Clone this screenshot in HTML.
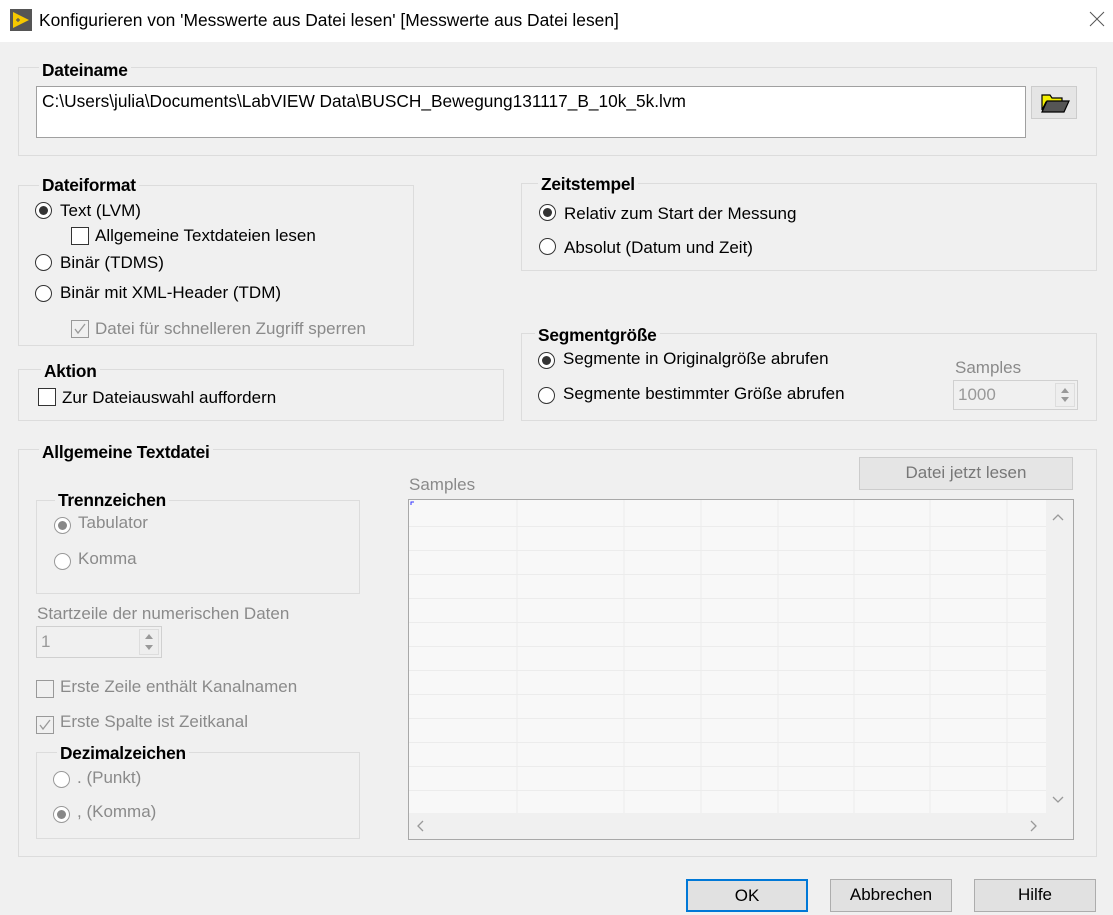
<!DOCTYPE html>
<html><head><meta charset="utf-8"><style>
*{box-sizing:border-box;margin:0;padding:0}
body{width:1113px;height:915px;background:#f0f0f0;font-family:"Liberation Sans",sans-serif;font-size:17px;color:#000;position:relative;overflow:hidden}
.a{position:absolute;white-space:nowrap}
.box{position:absolute;border:1px solid #dcdcdc}
.lb{position:absolute;font-weight:bold;font-size:17.3px;background:#f0f0f0;padding:0 3px;white-space:nowrap;line-height:20px;letter-spacing:-0.2px}
.g{color:#8a8a8a}
.r{position:absolute;width:17px;height:17px;border:1px solid #333;border-radius:50%;background:#fff}
.r.on::after{content:"";position:absolute;left:3px;top:3px;width:9px;height:9px;border-radius:50%;background:#333}
.r.d{border-color:#999}
.r.d.on::after{background:#888}
.c{position:absolute;width:18px;height:18px;border:1px solid #333;background:#fff}
.c.d{border-color:#999;background:#f0f0f0}
.btn{position:absolute;border:1px solid #adadad;background:#e1e1e1;text-align:center;line-height:30px}
.num{position:absolute;border:1px solid #d0d0d0;background:#f0f0f0;color:#999;padding-left:4px}
.sp{position:absolute;top:2px;bottom:2px;right:2px;width:20px;border:1px solid #ddd;background:#eee}
.sp::before{content:"";position:absolute;left:5px;top:4px;border:4px solid transparent;border-bottom:5px solid #999;border-top:0}
.sp::after{content:"";position:absolute;left:5px;bottom:4px;border:4px solid transparent;border-top:5px solid #999;border-bottom:0}
</style></head><body>
<div class="a" style="left:0;top:0;width:1113px;height:42px;background:#fff"></div>
<svg class="a" style="left:10px;top:9px" width="22" height="22"><rect width="22" height="22" fill="#555"/><path d="M3 3 L19 11 L3 19Z" fill="#f5c800"/><path d="M6 11h4M8 9v4" stroke="#555" stroke-width="1.2"/></svg>
<div class="a" style="left:39px;top:10px;font-size:17.4px">Konfigurieren von 'Messwerte aus Datei lesen' [Messwerte aus Datei lesen]</div>
<svg class="a" style="left:1089px;top:11px" width="16" height="16"><path d="M1 1L15 15M15 1L1 15" stroke="#555" stroke-width="1"/></svg>

<div class="box" style="left:18px;top:67px;width:1079px;height:89px"></div>
<div class="lb" style="left:39px;top:60px">Dateiname</div>
<div class="a" style="left:36px;top:86px;width:990px;height:52px;background:#fff;border:1px solid #a0a0a0"></div>
<div class="a" style="left:42px;top:91px;font-size:17.3px">C:\Users\julia\Documents\LabVIEW Data\BUSCH_Bewegung131117_B_10k_5k.lvm</div>
<div class="btn" style="left:1031px;top:86px;width:46px;height:33px;border-color:#ccc;background:#e5e5e5"></div>
<svg class="a" style="left:1040px;top:92px" width="30" height="22"><path d="M2 3h8l2 3h10v4H6L2 18Z" fill="#f4f000" stroke="#000" stroke-width="1.2"/><path d="M2 20L7 9h22l-5 11Z" fill="#555" stroke="#000" stroke-width="1.2"/></svg>

<div class="box" style="left:18px;top:185px;width:396px;height:161px"></div>
<div class="lb" style="left:39px;top:175px">Dateiformat</div>
<div class="r on" style="left:35px;top:202px"></div><div class="a" style="left:60px;top:201px">Text (LVM)</div>
<div class="c" style="left:71px;top:227px"></div><div class="a" style="left:95px;top:226px">Allgemeine Textdateien lesen</div>
<div class="r" style="left:35px;top:254px"></div><div class="a" style="left:60px;top:253px">Binär (TDMS)</div>
<div class="r" style="left:35px;top:285px"></div><div class="a" style="left:60px;top:283px">Binär mit XML-Header (TDM)</div>
<div class="c d" style="left:71px;top:320px"></div><svg class="a" style="left:73px;top:322px" width="14" height="14"><path d="M2 7l3 4 7-9" stroke="#999" fill="none" stroke-width="1.3"/></svg>
<div class="a g" style="left:95px;top:319px">Datei für schnelleren Zugriff sperren</div>

<div class="box" style="left:18px;top:369px;width:486px;height:52px"></div>
<div class="lb" style="left:41px;top:361px">Aktion</div>
<div class="c" style="left:38px;top:388px"></div><div class="a" style="left:62px;top:388px">Zur Dateiauswahl auffordern</div>

<div class="box" style="left:521px;top:183px;width:576px;height:88px"></div>
<div class="lb" style="left:538px;top:174px">Zeitstempel</div>
<div class="r on" style="left:539px;top:204px"></div><div class="a" style="left:564px;top:204px">Relativ zum Start der Messung</div>
<div class="r" style="left:539px;top:238px"></div><div class="a" style="left:564px;top:238px">Absolut (Datum und Zeit)</div>

<div class="box" style="left:521px;top:333px;width:576px;height:88px"></div>
<div class="lb" style="left:535px;top:325px">Segmentgröße</div>
<div class="r on" style="left:538px;top:352px"></div><div class="a" style="left:563px;top:349px">Segmente in Originalgröße abrufen</div>
<div class="r" style="left:538px;top:387px"></div><div class="a" style="left:563px;top:384px">Segmente bestimmter Größe abrufen</div>
<div class="a g" style="left:955px;top:358px">Samples</div>
<div class="num" style="left:953px;top:380px;width:125px;height:30px;line-height:28px">1000<div class="sp"></div></div>

<div class="box" style="left:18px;top:449px;width:1079px;height:408px"></div>
<div class="lb" style="left:39px;top:442px">Allgemeine Textdatei</div>
<div class="box" style="left:36px;top:500px;width:324px;height:94px"></div>
<div class="lb" style="left:55px;top:490px">Trennzeichen</div>
<div class="r d on" style="left:54px;top:517px"></div><div class="a g" style="left:78px;top:513px">Tabulator</div>
<div class="r d" style="left:54px;top:553px"></div><div class="a g" style="left:78px;top:549px">Komma</div>
<div class="a g" style="left:37px;top:604px">Startzeile der numerischen Daten</div>
<div class="num" style="left:36px;top:626px;width:126px;height:32px;line-height:30px">1<div class="sp"></div></div>
<div class="c d" style="left:36px;top:680px"></div><div class="a g" style="left:60px;top:677px">Erste Zeile enthält Kanalnamen</div>
<div class="c d" style="left:36px;top:716px"></div><svg class="a" style="left:38px;top:718px" width="14" height="14"><path d="M2 7l3 4 7-9" stroke="#999" fill="none" stroke-width="1.3"/></svg>
<div class="a g" style="left:60px;top:712px">Erste Spalte ist Zeitkanal</div>
<div class="box" style="left:36px;top:752px;width:324px;height:87px"></div>
<div class="lb" style="left:57px;top:743px">Dezimalzeichen</div>
<div class="r d" style="left:53px;top:771px"></div><div class="a g" style="left:77px;top:768px">. (Punkt)</div>
<div class="r d on" style="left:53px;top:806px"></div><div class="a g" style="left:77px;top:802px">, (Komma)</div>

<div class="a g" style="left:409px;top:475px">Samples</div>
<div class="btn" style="left:859px;top:457px;width:214px;height:33px;border-color:#ccc;background:#e5e5e5;color:#777">Datei jetzt lesen</div>
<div class="a" style="left:408px;top:499px;width:666px;height:341px;border:1px solid #a8a8a8;background:#f0f0f0"></div>
<svg class="a" style="left:409px;top:500px" width="637" height="313">
<rect width="637" height="313" fill="#f8f8f8"/>
<g stroke="#ececec" stroke-width="1">
<path d="M108 0V313M215 0V313M292 0V313M369 0V313M445 0V313M521 0V313M598 0V313"/>
<path d="M0 26.5H637M0 50.5H637M0 74.5H637M0 98.5H637M0 122.5H637M0 146.5H637M0 170.5H637M0 194.5H637M0 218.5H637M0 242.5H637M0 266.5H637M0 290.5H637"/>
</g>
<path d="M2 5V2H5" stroke="#33f" fill="none"/>
</svg>
<svg class="a" style="left:1050px;top:510px" width="16" height="300"><path d="M3 10l5-5 5 5" stroke="#999" fill="none" stroke-width="1.3"/><path d="M3 287l5 5 5-5" stroke="#999" fill="none" stroke-width="1.3"/></svg>
<svg class="a" style="left:414px;top:818px" width="630" height="16"><path d="M9 3l-5 5 5 5" stroke="#999" fill="none" stroke-width="1.3"/><path d="M617 3l5 5-5 5" stroke="#999" fill="none" stroke-width="1.3"/></svg>

<div class="btn" style="left:686px;top:879px;width:122px;height:33px;border:2px solid #0078d7">OK</div>
<div class="btn" style="left:830px;top:879px;width:122px;height:33px">Abbrechen</div>
<div class="btn" style="left:974px;top:879px;width:122px;height:33px">Hilfe</div>
</body></html>
